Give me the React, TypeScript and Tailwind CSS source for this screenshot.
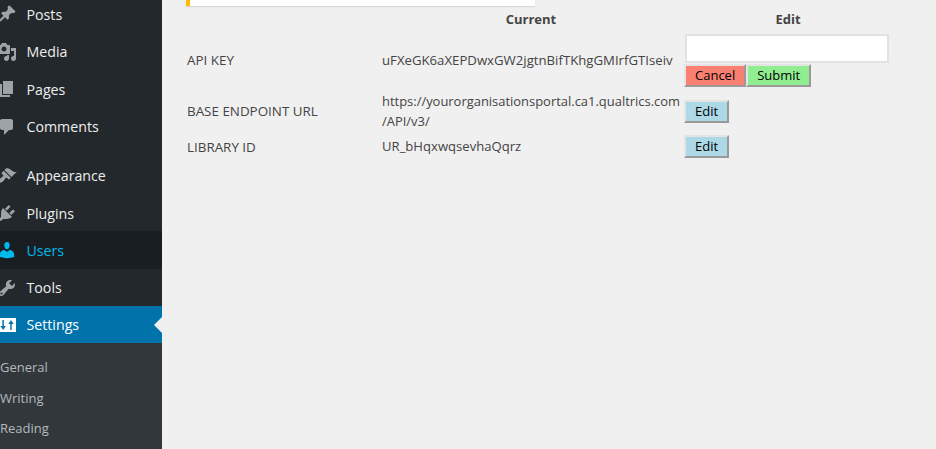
import type { ReactNode } from 'react';

const font = { fontFamily: '"Open Sans", sans-serif' };

const icons: Record<string, string> = {
  Posts: 'M10.44 3.02l1.82-1.82 6.36 6.35-1.83 1.82c-1.05-.68-2.48-.57-3.41.36l-.75.75c-.92.93-1.04 2.35-.35 3.41l-1.83 1.82-2.41-2.41-2.8 2.79c-.42.42-3.38 2.71-3.8 2.29s1.86-3.39 2.28-3.81l2.79-2.79L4.1 9.36l1.83-1.82c1.05.69 2.48.57 3.4-.36l.75-.75c.93-.92 1.05-2.35.36-3.41z',
  Media: 'M13 11V4c0-.55-.45-1-1-1h-1.67L9 1H5L3.67 3H2c-.55 0-1 .45-1 1v7c0 .55.45 1 1 1h10c.55 0 1-.45 1-1zM7 4.5c1.38 0 2.5 1.12 2.5 2.5S8.38 9.5 7 9.5 4.5 8.38 4.5 7 5.62 4.5 7 4.5zM14 6h5v10.5c0 1.38-1.12 2.5-2.5 2.5S14 17.88 14 16.5s1.12-2.5 2.5-2.5c.17 0 .34.02.5.05V9h-3V6zm-4 8.05V13h2v3.5c0 1.38-1.12 2.5-2.5 2.5S7 17.88 7 16.5 8.12 14 9.5 14c.17 0 .34.02.5.05z',
  Pages: 'M6 15V2h10v13H6zm-1 1h8v2H3V5h2v11z',
  Comments: 'M5 2h9c1.1 0 2 .9 2 2v7c0 1.1-.9 2-2 2h-2l-5 5v-5H5c-1.1 0-2-.9-2-2V4c0-1.1.9-2 2-2z',
  Appearance: 'M14.48 11.06L7.41 3.99l1.5-1.5c.5-.56 2.3-.47 3.51.32 1.21.8 1.43 1.28 2.91 2.1 1.18.64 2.45 1.26 4.45.85zm-.71.71L6.7 4.7 4.93 6.47c-.39.39-.39 1.02 0 1.41l1.06 1.06c.39.39.39 1.03 0 1.42-.6.6-1.43 1.11-2.21 1.69-.35.26-.7.53-1.01.84C1.43 13.23.76 14.91 1.95 16.1c1.2 1.2 2.88.52 4.25-.83.3-.31.58-.66.84-1.02.57-.78 1.08-1.61 1.69-2.21.39-.39 1.02-.39 1.41 0l1.06 1.06c.39.39 1.02.39 1.41 0z',
  Plugins: 'M13.11 4.36L9.87 7.6 8 5.73l3.24-3.24c.35-.34 1.05-.2 1.56.32.52.51.66 1.21.31 1.55zm-8 1.77l.91-1.12 9.01 9.01-1.19.84c-.71.71-2.63 1.16-3.82 1.16H6.14L4.9 17.26c-.59.59-1.54.59-2.12 0-.59-.58-.59-1.53 0-2.12l1.24-1.24v-3.88c0-1.13.4-3.19 1.09-3.89zm7.26 3.97l3.24-3.24c.34-.35 1.04-.21 1.55.31.52.51.66 1.21.31 1.55l-3.24 3.25z',
  Users: 'M10 9.25c-2.27 0-2.73-3.44-2.73-3.44C7 4.02 7.82 2 9.97 2c2.16 0 2.98 2.02 2.71 3.81 0 0-.41 3.44-2.68 3.44zm0 2.57L12.72 10c2.39 0 4.52 2.33 4.52 4.53v2.49s-3.65 1.13-7.24 1.13c-3.65 0-7.24-1.13-7.24-1.13v-2.49c0-2.25 1.94-4.48 4.47-4.48z',
  Tools: 'M16.68 9.77c-1.34 1.34-3.3 1.67-4.95.99l-5.41 6.52c-.99.99-2.59.99-3.58 0s-.99-2.59 0-3.57l6.52-5.42c-.68-1.65-.35-3.61.99-4.95 1.28-1.28 3.12-1.62 4.72-1.06l-2.89 2.89 2.82 2.82 2.86-2.87c.53 1.58.18 3.39-1.08 4.65zM3.81 16.21c.4.39 1.04.39 1.43 0 .4-.4.4-1.04 0-1.43-.39-.4-1.03-.4-1.43 0-.39.39-.39 1.03 0 1.43z',
  Settings: 'M3 3h16v14H3zM5.400 5v6h-2l2.750 4 2.750-4h-2V5zM14 5l-2.750 4h2v6h1.500V9h2z',
};

function MenuItem({ name, className = '', iconColor = 'text-[#9ea3a8]' }: { name: string; className?: string; iconColor?: string }) {
  return (
    <div className={'flex items-center text-[14.2px] ' + className}>
      <svg viewBox="0 0 20 20" className={'w-5 h-5 -ml-[3px] mr-[9.5px] shrink-0 fill-current ' + iconColor}>
        <path fillRule="evenodd" d={icons[name]} />
      </svg>
      {name}
    </div>
  );
}

function Btn({ bg, children }: { bg: string; children: ReactNode }) {
  return (
    <button className={'h-[23px] px-[9px] text-[13px] leading-none text-black border-2 border-t-[#e4e4e4] border-l-[#e4e4e4] border-r-[#999] border-b-[#999] ' + bg}>
      {children}
    </button>
  );
}

export default function App() {
  return (
    <div className="w-[936px] h-[449px] flex overflow-hidden bg-[#f0f0f0]" style={font}>
      <aside className="w-[162px] shrink-0 bg-[#23282d] text-[#eee]">
        <div className="-mt-[4.5px]">
          {['Posts', 'Media', 'Pages', 'Comments'].map((m) => <MenuItem key={m} name={m} className="h-[37.5px]" />)}
          <div className="h-[11.5px]" />
          <MenuItem name="Appearance" className="h-[37.5px]" />
          <MenuItem name="Plugins" className="h-[36.5px] pt-px" />
          <MenuItem name="Users" className="h-[37.5px] pt-px bg-[#191e23] text-[#00b9eb]" iconColor="text-[#00b9eb]" />
          <MenuItem name="Tools" className="h-[37.5px] pt-px" />
          <div className="relative">
            <MenuItem name="Settings" className="h-[37px] bg-[#0073aa] text-white" iconColor="text-white" />
            <div className="absolute right-0 top-[11px] w-0 h-0 border-y-[8px] border-y-transparent border-r-[8px] border-r-[#f0f0f0]" />
          </div>
        </div>
        <div className="bg-[#32373c] h-[110px] pt-[9px] text-[13px] text-[#b4b9be]">
          {['General', 'Writing', 'Reading'].map((s) => (
            <div key={s} className="h-[30.5px] leading-[30.5px]">{s}</div>
          ))}
        </div>
      </aside>

      <main className="flex-1 pl-[24px] text-[13.4px] text-[#444]">
        <div className="w-[349px] h-[6px] bg-white border-l-4 border-[#ffb900] shadow-[0_1px_1px_rgba(0,0,0,0.1)]" />
        <div className="mt-[3px] ml-px grid grid-cols-[195px_302px_205px] gap-y-1 items-center">
          <div />
          <div className="font-bold text-center h-[21px] leading-[21px] text-[13px] pr-[4px]">Current</div>
          <div className="font-bold text-center h-[21px] leading-[21px] text-[13px] pl-[3px]">Edit</div>

          <div>API KEY</div>
          <div className="text-[13.2px]">uFXeGK6aXEPDwxGW2jgtnBifTKhgGMIrfGTIseiv</div>
          <div>
            <input className="block ml-px w-[204px] h-[29px] bg-white border-2 border-[#e2e2e2]" />
            <div className="flex mt-px">
              <Btn bg="bg-[#fa8072]">Cancel</Btn>
              <Btn bg="bg-[#90ee90]">Submit</Btn>
            </div>
          </div>

          <div>BASE ENDPOINT URL</div>
          <div className="text-[12.95px] leading-[20px]">https://yourorganisationsportal.ca1.qualtrics.com<br />/API/v3/</div>
          <div><Btn bg="bg-[#add8e6]">Edit</Btn></div>

          <div className="pt-px">LIBRARY ID</div>
          <div className="pt-px text-[13.1px]">UR_bHqxwqsevhaQqrz</div>
          <div><Btn bg="bg-[#add8e6]">Edit</Btn></div>
        </div>
      </main>
    </div>
  );
}
